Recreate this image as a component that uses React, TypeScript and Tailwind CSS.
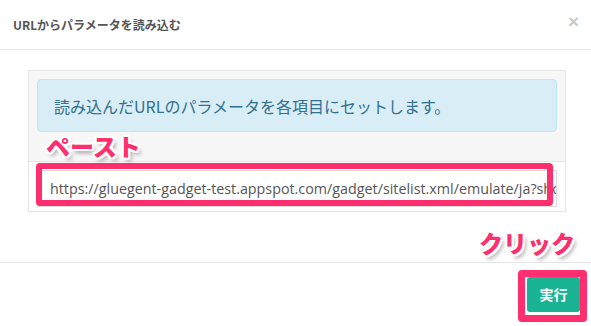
import React from 'react';

const pinkText =
  "[text-shadow:-2px_-2px_0_#fff,2px_-2px_0_#fff,-2px_2px_0_#fff,2px_2px_0_#fff,0_-2px_0_#fff,0_2px_0_#fff,-2px_0_0_#fff,2px_0_0_#fff,3px_4px_4px_rgba(0,0,0,0.35)]";

const App: React.FC = () => {
  return (
    <div className="relative w-[591px] h-[326px] bg-white overflow-hidden font-['Open_Sans','Noto_Sans_CJK_JP',sans-serif]">
      {/* header */}
      <div className="h-[50px] border-b border-[#e5e5e5] pl-[13px] pr-[12px] flex items-center justify-between">
        <h4 className="text-[12px] font-bold text-[#555] font-['Noto_Sans_CJK_JP',sans-serif]">URLからパラメータを読み込む</h4>
        <span className="text-[19px] leading-none font-bold text-[#c9c9c9] font-['Liberation_Sans',sans-serif] -mt-[6px]">×</span>
      </div>

      {/* body */}
      <div className="pt-[20px] pl-[28px] pr-[25px] pb-[50px]">
        <div className="border border-[#e6e6e6]">
          <div className="bg-[#f7f7f7] px-[8px] pt-[8px] pb-[29px] border-b border-[#e3e3e3]">
            <div className="h-[53px] rounded-[4px] bg-[#d9edf7] border border-[#bce8f1] pl-[16px] flex items-center text-[16px] text-[#31708f] font-['Noto_Sans_CJK_JP',sans-serif]">
              読み込んだURLのパラメータを各項目にセットします。
            </div>
          </div>
          <div className="bg-white px-[8px] pt-[8px] pb-[4px]">
            <input
              readOnly
              value="https://gluegent-gadget-test.appspot.com/gadget/sitelist.xml/emulate/ja?show=true"
              className="block w-full h-[37px] border border-[#d9d9d9] pl-[12px] text-[14.3px] text-[#555] bg-white outline-none font-['Open_Sans',sans-serif]"
            />
          </div>
        </div>
      </div>

      {/* footer */}
      <div className="h-[63px] border-t border-[#e5e5e5] flex justify-end items-start pt-[14px] pr-[11px]">
        <button className="w-[53px] h-[35px] rounded-[3px] bg-[#1ab394] text-white text-[14px] font-bold font-['Noto_Sans_CJK_JP',sans-serif]">
          実行
        </button>
      </div>

      {/* annotations */}
      <div className="absolute left-[36px] top-[163px] w-[517px] h-[43px] border-[6px] border-[#ff2e6e] rounded-[4px]" />
      <div className="absolute left-[518px] top-[270px] w-[69px] h-[52px] border-[7px] border-[#ff2e6e] rounded-[4px]" />
      <div className={`absolute left-[46px] top-[134px] text-[24px] leading-none font-black text-[#ff2e6e] font-['Noto_Sans_CJK_JP',sans-serif] ${pinkText}`}>
        ペースト
      </div>
      <div className={`absolute left-[479px] top-[231px] text-[24px] leading-none font-black text-[#ff2e6e] font-['Noto_Sans_CJK_JP',sans-serif] ${pinkText}`}>
        クリック
      </div>
    </div>
  );
};

export default App;
